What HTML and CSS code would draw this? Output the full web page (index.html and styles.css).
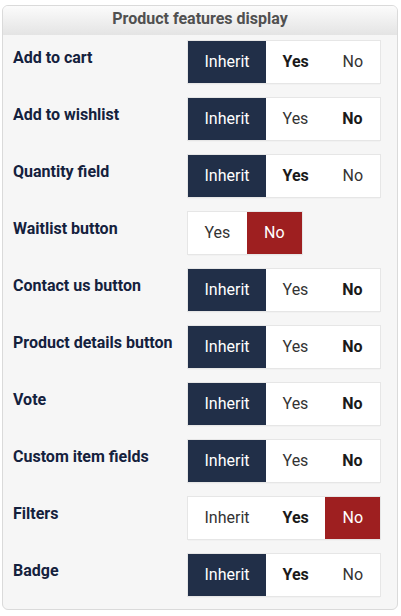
FILE: index.html
```html
<!DOCTYPE html>
<html lang="en">
<head>
    <meta charset="UTF-8">
    <meta name="viewport" content="width=device-width, initial-scale=1.0">
    <title>Product features display</title>
    <link rel="stylesheet" href="styles.css">
</head>
<body>
    <div class="panel">
        <div class="panel-heading">Product features display</div>
        <div class="panel-body">
            <div class="field">
                <div class="field-label">Add to cart</div>
                <div class="switch">
                    <span class="opt selected">Inherit</span>
                    <span class="opt inherited">Yes</span>
                    <span class="opt">No</span>
                </div>
            </div>
            <div class="field">
                <div class="field-label">Add to wishlist</div>
                <div class="switch">
                    <span class="opt selected">Inherit</span>
                    <span class="opt">Yes</span>
                    <span class="opt inherited">No</span>
                </div>
            </div>
            <div class="field">
                <div class="field-label">Quantity field</div>
                <div class="switch">
                    <span class="opt selected">Inherit</span>
                    <span class="opt inherited">Yes</span>
                    <span class="opt">No</span>
                </div>
            </div>
            <div class="field">
                <div class="field-label">Waitlist button</div>
                <div class="switch">
                    <span class="opt">Yes</span>
                    <span class="opt selected-no">No</span>
                </div>
            </div>
            <div class="field">
                <div class="field-label">Contact us button</div>
                <div class="switch">
                    <span class="opt selected">Inherit</span>
                    <span class="opt">Yes</span>
                    <span class="opt inherited">No</span>
                </div>
            </div>
            <div class="field">
                <div class="field-label">Product details button</div>
                <div class="switch">
                    <span class="opt selected">Inherit</span>
                    <span class="opt">Yes</span>
                    <span class="opt inherited">No</span>
                </div>
            </div>
            <div class="field">
                <div class="field-label">Vote</div>
                <div class="switch">
                    <span class="opt selected">Inherit</span>
                    <span class="opt">Yes</span>
                    <span class="opt inherited">No</span>
                </div>
            </div>
            <div class="field">
                <div class="field-label">Custom item fields</div>
                <div class="switch">
                    <span class="opt selected">Inherit</span>
                    <span class="opt">Yes</span>
                    <span class="opt inherited">No</span>
                </div>
            </div>
            <div class="field">
                <div class="field-label">Filters</div>
                <div class="switch">
                    <span class="opt">Inherit</span>
                    <span class="opt inherited">Yes</span>
                    <span class="opt selected-no">No</span>
                </div>
            </div>
            <div class="field">
                <div class="field-label">Badge</div>
                <div class="switch">
                    <span class="opt selected">Inherit</span>
                    <span class="opt inherited">Yes</span>
                    <span class="opt">No</span>
                </div>
            </div>
        </div>
    </div>
</body>
</html>
```

FILE: styles.css
```css
body {
    font-family: Roboto, Arial, sans-serif;
    margin: 0;
    padding: 5px 3px 0 2px;
    background-color: #fff;
}

.panel {
    background-color: #f6f6f6;
    border: 1px solid #dadada;
    border-radius: 6px;
    overflow: hidden;
}

.panel-heading {
    height: 29px;
    line-height: 25px;
    text-align: center;
    font-size: 16px;
    font-weight: bold;
    color: #505050;
    background: linear-gradient(#fbfbfb, #e4e4e4);
}

.panel-body {
    padding: 6px 10px 13px 10px;
}

.field {
    display: flex;
    align-items: flex-start;
    margin-bottom: 15px;
}

.field:last-child {
    margin-bottom: 0;
}

.field-label {
    width: 175px;
    padding-top: 7px;
    font-size: 16px;
    line-height: 20px;
    font-weight: bold;
    color: #14213d;
}

.switch {
    display: flex;
    background-color: #fff;
    box-shadow: 0 0 0 1px #e6e6e6, 0 1px 1px rgba(0, 0, 0, 0.12);
}

.opt {
    min-width: 55px;
    box-sizing: border-box;
    padding: 0 16.5px;
    height: 42px;
    line-height: 42px;
    text-align: center;
    font-size: 16px;
    color: #333;
}

.opt.inherited {
    font-weight: bold;
    color: #1a1a1a;
}

.opt.selected {
    background-color: #212f48;
    color: #fff;
}

.opt.selected-no {
    background-color: #9e1f20;
    color: #fff;
}
```
